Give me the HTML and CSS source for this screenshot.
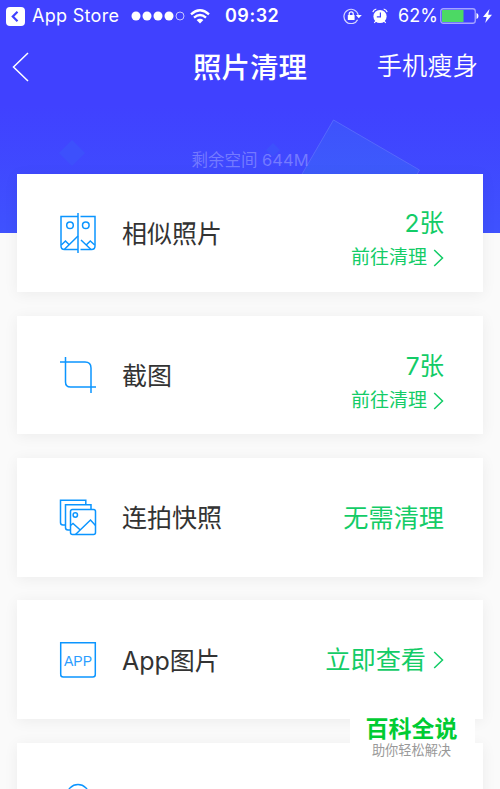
FILE: index.html
```html
<!DOCTYPE html>
<html lang="zh-CN">
<head>
    <meta charset="UTF-8">
    <meta name="viewport" content="width=device-width, initial-scale=1.0">
    <title>照片清理</title>
    <link rel="stylesheet" href="styles.css">
</head>
<body>
    <header class="header">
        <svg class="shapes" width="500" height="233" viewBox="0 0 500 233">
            <defs>
                <linearGradient id="square" x1="0" y1="0" x2="0" y2="1">
                    <stop offset="0" stop-color="#3e52fc"/>
                    <stop offset="1" stop-color="#3c68fa"/>
                </linearGradient>
            </defs>
            <path d="M72 140l13 13-13 13-13-13z" fill="#3d50fc"/>
            <path d="M273 143l7 7-7 7-7-7z" fill="#3d50fc"/>
            <path d="M333.500 120l86 50-50 86-86-50z" fill="url(#square)" stroke="#5568fd"/>
        </svg>

        <div class="status">
            <svg class="back-app" width="19" height="19" viewBox="0 0 19 19">
                <rect width="19" height="19" rx="4" fill="#fff"/>
                <path d="M11.500 4.800L6.800 9.500l4.700 4.700" fill="none" stroke="#4041ff" stroke-width="2.200"/>
            </svg>
            <span class="store">App Store</span>
            <svg class="signal" width="54" height="10" viewBox="0 0 54 10">
                <g fill="#fff">
                    <circle cx="5" cy="5" r="4.500"/>
                    <circle cx="16" cy="5" r="4.500"/>
                    <circle cx="27" cy="5" r="4.500"/>
                    <circle cx="38" cy="5" r="4.500"/>
                </g>
                <circle cx="49" cy="5" r="4" fill="none" stroke="#c5c5ff"/>
            </svg>
            <svg class="wifi" width="20" height="15" viewBox="0 0 20 15">
                <g fill="none" stroke="#fff" stroke-width="2.300">
                    <path d="M1 5.300Q10-2.800 19 5.300"/>
                    <path d="M4 8.700Q10 3.300 16 8.700"/>
                </g>
                <path d="M6.600 11q3.400-2.700 6.800 0L10 14.500z" fill="#fff"/>
            </svg>
            <span class="time">09:32</span>
            <svg class="lock" width="19" height="16" viewBox="0 0 19 16">
                <path d="M14.600 11.700A7.200 7.200 0 1 1 15.200 7" fill="none" stroke="#d5d5ff" stroke-width="1.200"/>
                <path d="M12.800 7h6l-3 3.300z" fill="#fff"/>
                <rect x="4.800" y="7" width="6.800" height="5" rx=".6" fill="#fff"/>
                <path d="M6.200 7.300V5.800a2 2 0 0 1 4 0v1.500" fill="none" stroke="#fff" stroke-width="1.200"/>
            </svg>
            <svg class="alarm" width="16" height="16" viewBox="0 0 16 16">
                <circle cx="8" cy="8.500" r="6.600" fill="#fff"/>
                <path d="M.8 4.200Q1.500 1.500 4.300 1M15.200 4.200Q14.500 1.500 11.700 1M3.800 13l-1.500 2M12.200 13l1.500 2" fill="none" stroke="#fff" stroke-width="1.200"/>
                <path d="M8.400 4.500v4.400H4.800" fill="none" stroke="#4041ff" stroke-width="1.200"/>
            </svg>
            <span class="percent">62%</span>
            <svg class="battery" width="39" height="16" viewBox="0 0 39 16">
                <rect x=".75" y=".75" width="34.500" height="14.500" rx="2.500" fill="none" stroke="#a5a5ff" stroke-width="1.300"/>
                <rect x="2" y="2" width="21.500" height="12" fill="#4cd964"/>
                <path d="M36.500 5q2 .5 2 3t-2 3z" fill="#fff"/>
            </svg>
            <svg class="bolt" width="9" height="14" viewBox="0 0 9 14">
                <path d="M6.500 0L0 8h3.700L2.200 14 9 5.700H5.200z" fill="#fff"/>
            </svg>
        </div>

        <nav class="nav">
            <svg class="back" width="17" height="30" viewBox="0 0 17 30">
                <path d="M16 1L1.500 15 16 29" fill="none" stroke="#fff" stroke-width="1.500"/>
            </svg>
            <h1>照片清理</h1>
            <span class="slim">手机瘦身</span>
        </nav>
        <p class="space">剩余空间 644M</p>
    </header>

    <main class="list">
        <section class="card">
            <svg class="icon" width="38" height="42" viewBox="0 0 38 42">
                <g fill="none" stroke="#0b95ff" stroke-width="1.500">
                    <path d="M19 1v40"/>
                    <path d="M19 4.500H2V34q0 3.500 3.500 3.500H19M21.500 4.500H36V34q0 3.500-3.500 3.500H21.500"/>
                    <circle cx="11" cy="13.300" r="3.300"/>
                    <circle cx="26.800" cy="13.300" r="3.300"/>
                    <path d="M19 24L5.500 37.300M2.300 33L6.500 29l3.700 3.700M22 28l10 9.500M27.500 32.700L31.300 29l4.400 4"/>
                </g>
            </svg>
            <h2>相似照片</h2>
            <div class="action">
                <span class="count">2张</span>
                <span class="go">前往清理
                    <svg class="arrow" width="11" height="18" viewBox="0 0 11 18"><path d="M1.200 1L9.500 9l-8.300 8" fill="none" stroke="#13cc67" stroke-width="1.500"/></svg>
                </span>
            </div>
        </section>

        <section class="card">
            <svg class="icon" width="38" height="42" viewBox="0 0 38 42">
                <path d="M1 8h25q6 0 6 6v25M6.500 3v25q0 5 5 5h25.500" fill="none" stroke="#0b95ff" stroke-width="1.500"/>
            </svg>
            <h2>截图</h2>
            <div class="action">
                <span class="count">7张</span>
                <span class="go">前往清理
                    <svg class="arrow" width="11" height="18" viewBox="0 0 11 18"><path d="M1.200 1L9.500 9l-8.300 8" fill="none" stroke="#13cc67" stroke-width="1.500"/></svg>
                </span>
            </div>
        </section>

        <section class="card">
            <svg class="icon" width="38" height="42" viewBox="0 0 38 42">
                <g fill="none" stroke="#0b95ff" stroke-width="1.500">
                    <rect x="11.500" y="13.500" width="25" height="25" rx="2"/>
                    <path d="M11 34H9q-2.500 0-2.500-2.500V8.700H32v4.500"/>
                    <path d="M6.200 29H4q-2.500 0-2.500-2.500V4.200h25.300v4.300"/>
                    <circle cx="16.300" cy="19" r="2.200"/>
                    <path d="M11.500 29.500l2.500-2 7 6.300M16.500 38.500L31.500 24l5 5.500"/>
                </g>
            </svg>
            <h2>连拍快照</h2>
            <div class="action">
                <span class="label">无需清理</span>
            </div>
        </section>

        <section class="card">
            <svg class="icon" width="38" height="42" viewBox="0 0 38 42">
                <path d="M1.700 3.700h34.600V35.500q0 2.500-2.500 2.500H4.200Q1.700 38 1.700 35.500z" fill="none" stroke="#0b95ff" stroke-width="1.500"/>
                <text class="icon-text" x="5" y="26.500" textLength="28">APP</text>
            </svg>
            <h2>App图片</h2>
            <div class="action">
                <span class="label">立即查看
                    <svg class="arrow" width="11" height="18" viewBox="0 0 11 18"><path d="M1.200 1L9.500 9l-8.300 8" fill="none" stroke="#13cc67" stroke-width="1.500"/></svg>
                </span>
            </div>
        </section>

        <section class="card">
            <svg class="icon" width="38" height="42" viewBox="0 0 38 42">
                <circle cx="19" cy="14.500" r="11" fill="none" stroke="#0b95ff" stroke-width="1.500"/>
            </svg>
        </section>
    </main>

    <aside class="badge">
        <strong>百科全说</strong>
        <span>助你轻松解决</span>
    </aside>
</body>
</html>
```

FILE: styles.css
```css
body {
    margin: 0;
    height: 789px;
    overflow: hidden;
    position: relative;
    background-color: #fafafa;
    font-family: Inter, "Noto Sans CJK SC", sans-serif;
    color: #333;
}

h1, h2, p {
    margin: 0;
    font-weight: normal;
}

svg {
    display: block;
    flex-shrink: 0;
}

.header {
    height: 233px;
    position: relative;
    overflow: hidden;
    color: white;
    background: linear-gradient(#4041ff 45%, #3f52fe);
}
.shapes {
    position: absolute;
    top: 0;
    left: 0;
}

.status {
    height: 32px;
    padding-left: 6px;
    position: relative;
    display: flex;
    align-items: center;
    font-size: 18px;
    line-height: 32px;
    white-space: nowrap;
}
.store {
    width: 88px;
    margin-left: 7px;
    letter-spacing: 0.3px;
}
.signal {
    margin-left: 11px;
}
.wifi {
    margin-left: 5px;
}
.time {
    width: 54px;
    margin-left: 15px;
    font-weight: 600;
    letter-spacing: 0.5px;
}
.lock {
    margin-left: 64px;
}
.alarm {
    margin-left: 10px;
}
.percent {
    width: 38px;
    margin-left: 10px;
}
.battery {
    margin-left: 4px;
}
.bolt {
    margin-left: 4px;
}

.nav {
    height: 70px;
    padding: 0 22px 0 12px;
    position: relative;
    display: grid;
    grid-template-columns: 1fr auto 1fr;
    align-items: center;
}
.nav h1 {
    margin: 2px 0 0 10px;
    font-size: 28.5px;
    font-weight: 500;
    line-height: 40px;
}
.slim {
    justify-self: end;
    margin-bottom: 2px;
    font-size: 25.3px;
    font-weight: 350;
    line-height: 36px;
}
.space {
    margin-top: 46px;
    position: relative;
    font-size: 16.5px;
    line-height: 24px;
    text-align: center;
    color: rgba(255, 255, 255, 0.28);
}

.list {
    margin: -59.5px 17px 0;
    position: relative;
    display: flex;
    flex-direction: column;
    gap: 23.7px;
}
.card {
    height: 118.6px;
    padding: 0 39px 0 42px;
    box-sizing: border-box;
    display: flex;
    align-items: center;
    background-color: white;
    box-shadow: 0 2px 14px rgba(0, 0, 0, 0.06);
}
.card h2 {
    margin: 2px 0 0 25px;
    font-size: 25px;
    line-height: 36px;
}
.icon-text {
    font-family: "Liberation Sans", sans-serif;
    font-size: 14px;
    fill: #2b9dff;
}

.action {
    margin-left: auto;
    display: flex;
    flex-direction: column;
    align-items: flex-end;
    color: #13cc67;
}
.count {
    margin-top: 15px;
    font-size: 24.5px;
    line-height: 36px;
}
.go {
    display: flex;
    align-items: center;
    gap: 6px;
    font-size: 19px;
    line-height: 34px;
}
.label {
    display: flex;
    align-items: center;
    gap: 7px;
    margin-top: 1px;
    font-size: 25.2px;
    line-height: 36px;
}

.badge {
    position: absolute;
    left: 350px;
    top: 708px;
    width: 125px;
    height: 57px;
    display: flex;
    flex-direction: column;
    align-items: center;
    background-color: white;
}
.badge strong {
    margin: 6px 0 0 -2px;
    font-size: 23px;
    font-weight: 700;
    line-height: 31px;
    color: #0c3;
}
.badge span {
    margin: -1px 0 0 -2px;
    font-size: 13.2px;
    line-height: 13px;
    color: #999;
}
```
